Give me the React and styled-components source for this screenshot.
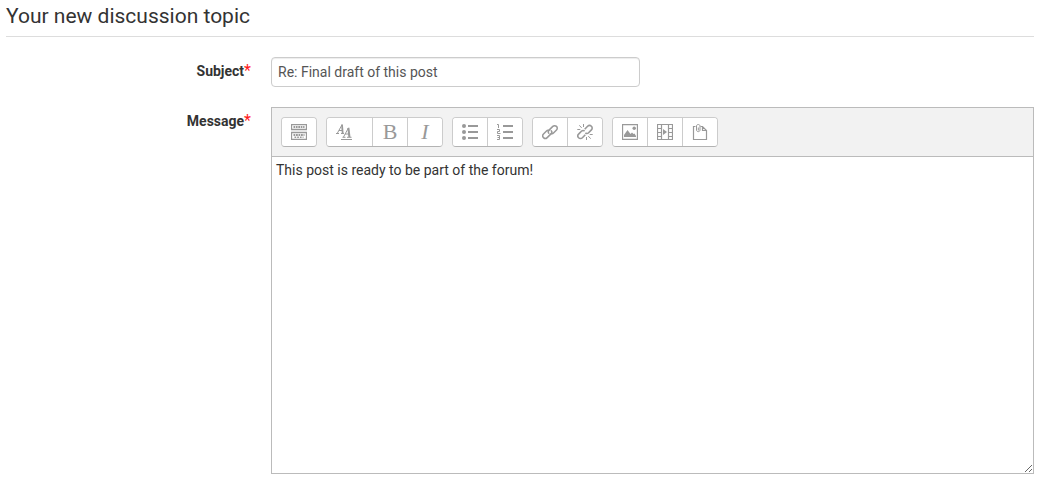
import React, { useState } from 'react';
import styled, { createGlobalStyle } from 'styled-components';

const GlobalStyle = createGlobalStyle`
  *, *::before, *::after { box-sizing: border-box; }
  body {
    margin: 0;
    background: #fff;
    color: #333;
    font: 14px/20px Roboto, sans-serif;
  }
`;

const Form = styled.form`
  padding: 0 11px 5px 6px;
`;

const Heading = styled.h1`
  margin: 0 0 20px;
  padding-bottom: 4px;
  border-bottom: 1px solid #ddd;
  font-size: 21px;
  line-height: 32px;
  font-weight: 400;
`;

const Row = styled.div`
  display: grid;
  grid-template-columns: 245px minmax(0, 1fr);
  column-gap: 20px;
  align-items: start;
  margin-bottom: ${(p) => (p.$last ? 0 : 20)}px;
`;

const Label = styled.label`
  padding-top: 4px;
  text-align: right;
  font-weight: 700;
`;

const Required = styled.span`
  color: #ff1a1a;
  font-size: 16px;
  line-height: 16px;
  font-weight: 400;
`;

const SubjectInput = styled.input`
  width: 369px;
  max-width: 100%;
  height: 30px;
  padding: 4px 6px;
  border: 1px solid #ccc;
  border-radius: 4px;
  background: #fff;
  color: #555;
  font: inherit;
  box-shadow: inset 0 1px 1px rgba(0, 0, 0, 0.075);
`;

const Editor = styled.div`
  border: 1px solid #bbb;
`;

const Toolbar = styled.div`
  display: flex;
  flex-wrap: wrap;
  gap: 9px;
  padding: 9px;
  background: #f2f2f2;
  border-bottom: 1px solid #bbb;
`;

const Group = styled.div`
  display: flex;
  border: 1px solid #ccc;
  border-bottom-color: #b3b3b3;
  border-radius: 4px;
  background: #fff;
  overflow: hidden;
`;

const ToolButton = styled.button`
  display: flex;
  align-items: center;
  justify-content: ${(p) => (p.$wide ? 'flex-start' : 'center')};
  box-sizing: content-box;
  width: ${(p) => (p.$wide ? 36 : 34)}px;
  height: 28px;
  padding: 0 0 0 ${(p) => (p.$wide ? 9 : 0)}px;
  border: 0;
  background: #fff;
  color: #999;
  cursor: pointer;

  & + & { border-left: 1px solid #ccc; }
  &:hover { background: #f7f7f7; }
`;

const Letter = styled.span`
  font: ${(p) => (p.$italic ? 'italic' : 'normal')} 22px/28px "Liberation Serif", serif;
`;

const Message = styled.textarea`
  display: block;
  width: 100%;
  height: 316px;
  min-height: 80px;
  padding: 3px 4px;
  border: 0;
  outline: 0;
  resize: both;
  background: #fff;
  color: #333;
  font: inherit;
`;

const Icon = styled.svg.attrs({ width: 16, height: 16, viewBox: '0 0 16 16', 'aria-hidden': true })`
  display: block;
  fill: none;
  stroke: #999;
`;

const Solid = styled.g`
  fill: #999;
  stroke: none;
`;

const KeyboardIcon = () => (
  <Icon>
    <path d="M.5.5h15v5H.5zM.5 8.5h15v7H.5z" strokeWidth="1.3" />
    <path d="M2.5 3h11" strokeWidth="2" strokeDasharray="1.7 .7" />
    <path d="M2.5 11h11" strokeWidth="1.8" strokeDasharray="1.8 .7" />
    <path d="M3.5 13.2h9" strokeWidth="1.6" strokeDasharray="1.7 1" />
  </Icon>
);

const StylesIcon = () => (
  <Icon>
    <path d="M0 9.5h3M5 9.5h3M1.2 9.5L6 .8M3 6.5h3.5" />
    <path d="M6 .5l.7 8.8" strokeWidth="1.8" />
    <path d="M6.5 13.3h3M11 13.3h4.5M7.5 13L12.5 3.8M9 10h4" />
    <path d="M12.4 3.8l1 9.2" strokeWidth="2.1" />
    <path d="M5 15.5h11" />
  </Icon>
);

const BulletIcon = () => (
  <Icon>
    <Solid>
      <circle cx="2" cy="2" r="2" />
      <circle cx="2" cy="8" r="2" />
      <circle cx="2" cy="14" r="2" />
      <path d="M6 1h10v2H6zM6 7h10v2H6zM6 13h10v2H6z" />
    </Solid>
  </Icon>
);

const NumberIcon = () => (
  <Icon>
    <path d="M0 .5h1.5V4M0 5.5h2.5v2H.5v2h3M0 11.5h2.5v4H0M.5 13.5h2" />
    <Solid><path d="M6 1h10v2H6zM6 7h10v2H6zM6 13h10v2H6z" /></Solid>
  </Icon>
);

const LinkIcon = () => (
  <Icon>
    <g strokeWidth="1.5" strokeLinecap="round">
      <path d="M6.8 9.2c-.9-.9-.8-2 0-2.8l4-4c.9-.9 2.6-1.1 3.7 0s.9 2.7 0 3.6l-3 3c-.7.7-1.6.8-2.4.5" />
      <path d="M9.2 6.8c.9.9.8 2 0 2.8l-4 4c-.9.9-2.6 1.1-3.7 0s-.9-2.7 0-3.6l3-3c.7-.7 1.6-.8 2.4-.5" />
    </g>
  </Icon>
);

const UnlinkIcon = () => (
  <Icon>
    <g strokeWidth="1.6">
      <path d="M7.7 5.2l2.9-2.9c1-1 2.7-1.1 3.8 0s.9 2.7 0 3.6l-2.8 2.8c-.9.9-2.2 1-3.2.3" />
      <path d="M8.3 10.8l-2.9 2.9c-1 1-2.7 1.1-3.8 0s-.9-2.7 0-3.6l2.8-2.8c.9-.9 2.2-1 3.2-.3" />
    </g>
    <path d="M6.5 0v3M2.3 1.3l2.4 2.6M.3 5.5h3M9.5 13v3M11.3 12.1l2.4 2.6M12.7 10.5h3" />
  </Icon>
);

const ImageIcon = () => (
  <Icon>
    <path d="M.5.5h15v15H.5z" strokeWidth="1.3" />
    <Solid>
      <circle cx="12.2" cy="4.2" r="1.7" />
      <path d="M2 13V11l3.5-5 3 4 1.5-1.5 1.5 1.5 1-.5L14 12v1z" />
    </Solid>
  </Icon>
);

const MediaIcon = () => (
  <Icon strokeWidth="1.2">
    <path d="M.5 0v16M4.5 0v16M11.5 0v16M15.5 0v16M4 .5h8M4 15.5h8" />
    <path d="M0 .5h4M0 4.5h4M0 8.5h4M0 12.5h4M0 15.5h4M12 .5h4M12 4.5h4M12 8.5h4M12 12.5h4M12 15.5h4" />
    <Solid><path d="M6 5v6l4-3z" /></Solid>
  </Icon>
);

const FilesIcon = () => (
  <Icon>
    <path d="M3.5 2.5h-2v13h13V6.5l-4-4H8.5M10.5 2.5v4h4" strokeWidth="1.2" />
    <path d="M4.5 3.5V6c0 2.2 3.5 2.2 3.5 0V2c0-2-3.5-2-3.5 0v2M6.3 3.5v3" />
  </Icon>
);

const groups = [
  [{ name: 'Show more buttons', icon: <KeyboardIcon /> }],
  [
    { name: 'Paragraph styles', icon: <StylesIcon />, wide: true },
    { name: 'Bold', icon: <Letter>B</Letter> },
    { name: 'Italic', icon: <Letter $italic>I</Letter> },
  ],
  [
    { name: 'Unordered list', icon: <BulletIcon /> },
    { name: 'Ordered list', icon: <NumberIcon /> },
  ],
  [
    { name: 'Link', icon: <LinkIcon /> },
    { name: 'Unlink', icon: <UnlinkIcon /> },
  ],
  [
    { name: 'Image', icon: <ImageIcon /> },
    { name: 'Media', icon: <MediaIcon /> },
    { name: 'Manage files', icon: <FilesIcon /> },
  ],
];

export default function App() {
  const [subject, setSubject] = useState('Re: Final draft of this post');
  const [message, setMessage] = useState('This post is ready to be part of the forum!');

  return (
    <>
      <GlobalStyle />
      <Form onSubmit={(e) => e.preventDefault()}>
        <Heading>Your new discussion topic</Heading>
        <Row>
          <Label htmlFor="subject">Subject<Required>*</Required></Label>
          <SubjectInput id="subject" type="text" required value={subject} onChange={(e) => setSubject(e.target.value)} />
        </Row>
        <Row $last>
          <Label htmlFor="message">Message<Required>*</Required></Label>
          <Editor>
            <Toolbar role="toolbar" aria-label="Formatting">
              {groups.map((tools) => (
                <Group key={tools[0].name}>
                  {tools.map((tool) => (
                    <ToolButton key={tool.name} type="button" aria-label={tool.name} $wide={tool.wide}>
                      {tool.icon}
                    </ToolButton>
                  ))}
                </Group>
              ))}
            </Toolbar>
            <Message id="message" required spellCheck={false} value={message} onChange={(e) => setMessage(e.target.value)} />
          </Editor>
        </Row>
      </Form>
    </>
  );
}
